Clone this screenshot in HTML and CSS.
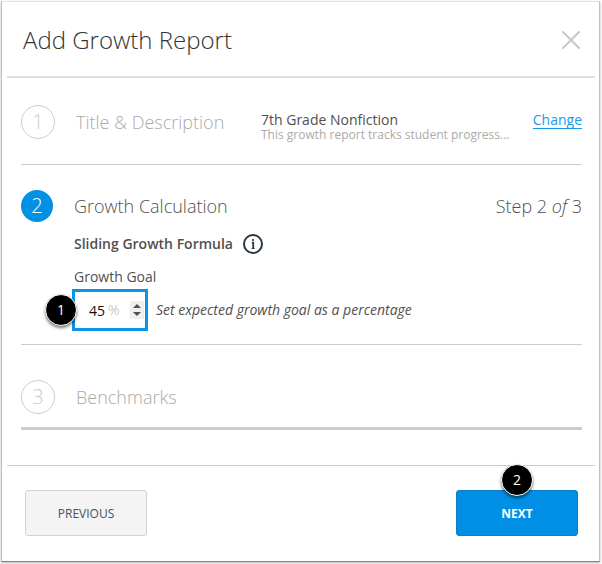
FILE: index.html
```
<!DOCTYPE html>
<html lang="en">
<head>
  <meta charset="UTF-8">
  <meta name="viewport" content="width=device-width, initial-scale=1.0">
  <title>Add Growth Report</title>
  <link rel="stylesheet" href="styles.css">
</head>
<body>
  <div class="dialog">
    <!-- Header -->
    <div class="dialog-header">
      <h1>Add Growth Report</h1>
      <button type="button" class="close-button" aria-label="Close">
        <svg width="20" height="20" viewBox="0 0 20 20" fill="none" stroke="#c8c8c8" stroke-width="2" stroke-linecap="round">
          <path d="M2 2l16 16M18 2L2 18"/>
        </svg>
      </button>
    </div>

    <form class="steps">
      <!-- Step 1 -->
      <div class="step step-closed">
        <span class="step-number">1</span>
        <h2>Title &amp; Description</h2>
        <div class="summary">
          <div class="summary-title">7th Grade Nonfiction</div>
          <div class="summary-text">This growth report tracks student progress...</div>
        </div>
        <a class="change-link" href="#">Change</a>
      </div>

      <!-- Step 2 -->
      <div class="step step-open">
        <span class="step-number active">2</span>
        <div class="step-content">
          <div class="step-heading">
            <h2>Growth Calculation</h2>
            <div class="step-count">Step 2 <em>of</em> 3</div>
          </div>
          <div class="formula">
            <h3>Sliding Growth Formula</h3>
            <button type="button" class="info-button" aria-label="About this formula">
              <svg width="20" height="20" viewBox="0 0 20 20">
                <circle cx="10" cy="10" r="9" fill="none" stroke="#263745" stroke-width="2"/>
                <circle cx="10" cy="6" r="1.1" fill="#263745"/>
                <path d="M8.8 8.7h1.4v5.8" fill="none" stroke="#263745" stroke-width="1.8"/>
                <path d="M8.6 14.5h3" fill="none" stroke="#263745" stroke-width="1"/>
              </svg>
            </button>
          </div>
          <label class="goal-label" for="growthGoal">Growth Goal</label>
          <div class="goal-row">
            <div class="goal-field">
              <input type="number" id="growthGoal" value="45" min="0" max="100">
              <span class="unit">%</span>
              <span class="spinner">
                <button type="button" aria-label="Increase"><svg width="8" height="4" viewBox="0 0 8 4"><path d="M0 4L4 0l4 4z" fill="#505050"/></svg></button>
                <button type="button" aria-label="Decrease"><svg width="8" height="4" viewBox="0 0 8 4"><path d="M0 0l4 4 4-4z" fill="#505050"/></svg></button>
              </span>
              <span class="marker marker-goal">1</span>
            </div>
            <em class="hint">Set expected growth goal as a percentage</em>
          </div>
        </div>
      </div>

      <!-- Step 3 -->
      <div class="step step-closed step-last">
        <span class="step-number">3</span>
        <h2>Benchmarks</h2>
      </div>
    </form>

    <!-- Footer -->
    <div class="dialog-footer">
      <button type="button" class="button">PREVIOUS</button>
      <div class="next">
        <button type="button" class="button button-primary">NEXT</button>
        <span class="marker marker-next">2</span>
      </div>
    </div>
  </div>
</body>
</html>
```

FILE: styles.css
```
* {
  box-sizing: border-box;
}

body {
  margin: 0;
  padding: 1px 2px 2px 1px;
  font-family: "Open Sans", sans-serif;
  font-size: 14px;
  line-height: 20px;
  color: #505050;
  background-color: #fff;
}

h1, h2, h3 {
  margin: 0;
}

button {
  padding: 0;
  border: none;
  background: none;
  font-family: inherit;
  cursor: pointer;
}

svg {
  display: block;
}

.dialog {
  border: 1px solid #c0c0c0;
  border-top-color: #e4e4e4;
  border-bottom-color: #858585;
  box-shadow: 0 1px 2px rgba(0, 0, 0, 0.3);
}

/* Header */
.dialog-header {
  display: flex;
  justify-content: space-between;
  align-items: center;
  height: 76px;
  margin: 0 4px 0 5px;
  padding: 2px 14px 0 16px;
  border-bottom: 2px solid #e0e0e0;
}

.dialog-header h1 {
  font-size: 24px;
  font-weight: 300;
  line-height: 32px;
  color: #333;
}

/* Steps */
.steps {
  padding: 0 17px 0 19px;
}

.step {
  display: flex;
  border-bottom: 1px solid #ccc;
}

.step h2,
.step-count {
  font-size: 18px;
  font-weight: 300;
  line-height: 24px;
}

.step-number {
  display: flex;
  justify-content: center;
  align-items: center;
  flex: none;
  width: 34px;
  height: 34px;
  border: 1px solid #ccc;
  border-radius: 50%;
  font-size: 20px;
  font-weight: 300;
  color: #ccc;
}

.step-number.active {
  width: 32px;
  height: 32px;
  border: none;
  background-color: #0090e4;
  color: #fff;
}

.step-closed {
  align-items: flex-start;
  padding: 27px 0 22px;
}

.step-closed h2 {
  flex: none;
  width: 206px;
  padding: 5px 0 0 21px;
  color: #aaa;
}

.summary {
  flex: 1;
  padding-top: 7px;
}

.summary-title {
  line-height: 16px;
}

.summary-text {
  font-size: 12px;
  line-height: 14px;
  color: #aaa;
}

.change-link {
  margin-top: 6px;
  border-bottom: 1px solid #1a98e8;
  line-height: 17px;
  color: #1a98e8;
  text-decoration: none;
}

.step-open {
  gap: 21px;
  padding: 25px 0 13px;
}

.step-content {
  flex: 1;
}

.step-heading {
  display: flex;
  justify-content: space-between;
  padding-top: 4px;
}

.formula {
  display: flex;
  align-items: center;
  gap: 10px;
  margin-top: 16px;
}

.formula h3 {
  font-size: 14px;
  font-weight: 600;
}

.goal-label {
  display: block;
  margin: 13px 0 2px;
}

.goal-row {
  display: flex;
  align-items: center;
  gap: 8px;
}

.goal-field {
  position: relative;
  display: flex;
  align-items: center;
  width: 76px;
  height: 42px;
  margin-left: -2px;
  padding: 0 1px 0 14px;
  border: 3px solid #0b93e8;
}

.goal-field input {
  width: 19px;
  padding: 0;
  border: none;
  outline: none;
  font-family: inherit;
  font-size: 14px;
  color: #111;
  appearance: textfield;
}

.goal-field input::-webkit-inner-spin-button {
  display: none;
}

.unit {
  color: #ccc;
}

.spinner {
  display: flex;
  flex-direction: column;
  justify-content: center;
  align-items: center;
  gap: 4px;
  width: 14px;
  height: 18px;
  margin-left: auto;
  background-color: #efefef;
}

.hint {
  font-size: 14px;
}

.step-last {
  padding: 35px 0 13px;
  border-bottom: 3px solid #ccc;
}

/* Numbered markers */
.marker {
  position: absolute;
  width: 32px;
  height: 32px;
  border: 1px solid #fff;
  border-radius: 50%;
  background-color: #000;
  box-shadow: 0 2px 3px rgba(0, 0, 0, 0.5);
  font-size: 14px;
  line-height: 30px;
  text-align: center;
  color: #fff;
}

.marker-goal {
  top: 2px;
  left: -30px;
}

.marker-next {
  top: -26px;
  left: 45px;
}

/* Footer */
.dialog-footer {
  display: flex;
  justify-content: space-between;
  margin: 35px 4px 0 5px;
  padding: 24px 17px 25px 18px;
  border-top: 1px solid #ccc;
}

.next {
  position: relative;
}

.button {
  width: 122px;
  height: 46px;
  border: 1px solid #cdd3d6;
  border-radius: 3px;
  background-color: #f4f4f4;
  font-size: 12px;
  color: #44525e;
}

.button-primary {
  border-color: #0a7fc8;
  background-color: #008fe5;
  font-weight: 700;
  color: #fff;
}
```
